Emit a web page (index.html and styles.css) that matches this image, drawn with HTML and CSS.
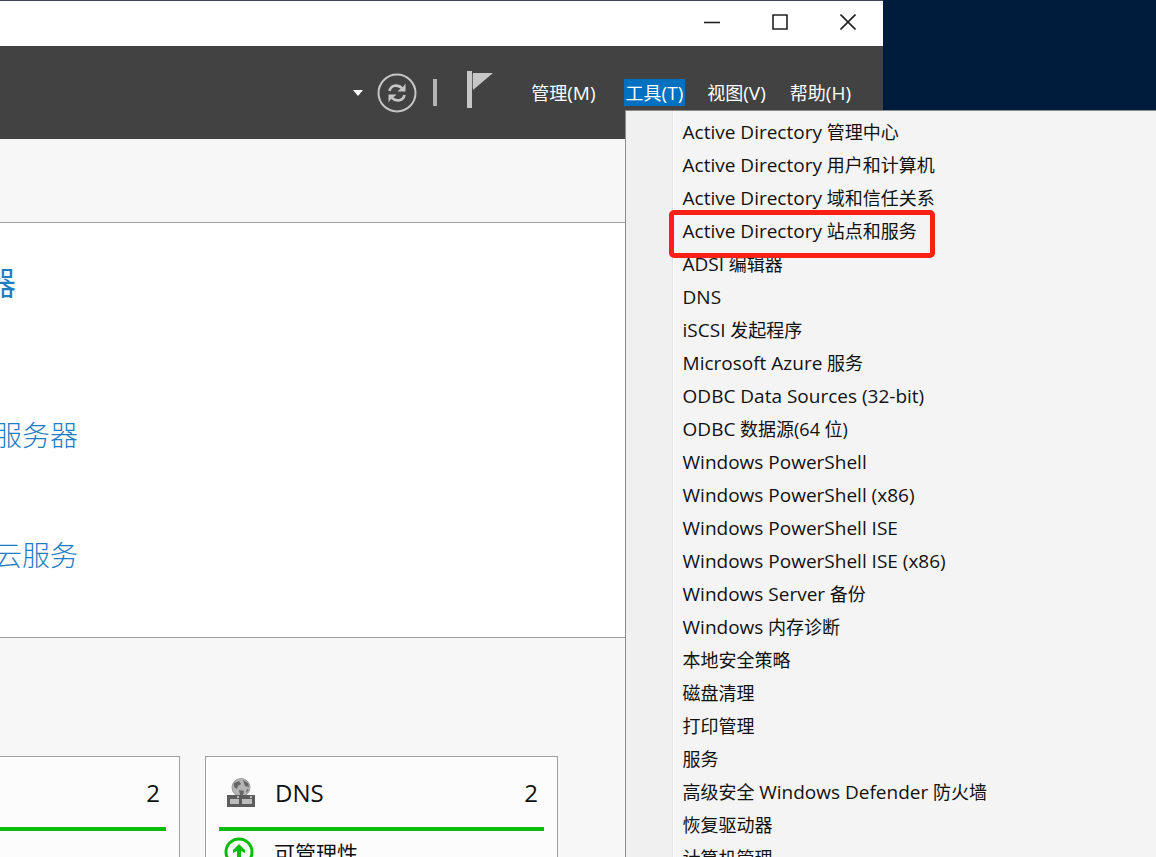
FILE: index.html
```html
<!DOCTYPE html>
<html lang="zh-CN">
<head>
<meta charset="utf-8">
<title>服务器管理器</title>
<link rel="stylesheet" href="styles.css">
</head>
<body>
<main class="window">
  <header class="titlebar">
    <button class="caption" aria-label="最小化"><svg width="16" height="16" viewBox="0 0 16 16"><path d="M0 8.500H16"/></svg></button>
    <button class="caption" aria-label="最大化"><svg width="16" height="16" viewBox="0 0 16 16"><path d="M1 1H15V15H1Z"/></svg></button>
    <button class="caption" aria-label="关闭"><svg width="16" height="16" viewBox="0 0 16 16"><path d="M.5.5L15.500 15.500M15.500.5L.5 15.500"/></svg></button>
  </header>
  <nav class="toolbar">
    <button class="tool tool-drop" aria-label="更多"><svg width="10" height="6" viewBox="0 0 10 6"><path d="M0 0H10L5 6Z" fill="#fff"/></svg></button>
    <button class="tool tool-refresh" aria-label="刷新">
      <svg width="40" height="40" viewBox="0 0 40 40" fill="none" stroke="#c6c6c6">
        <circle cx="20" cy="20" r="18.500" stroke-width="2"/>
        <path d="M12.500 18C13.500 12.500 20.500 10.500 25.500 15.500M27.500 22C26.500 27.500 19.500 29.500 14.500 24.500" stroke-width="2.600"/>
        <path d="M28.500 10.500V18.500H20.500L22.500 16.500L25 15.500ZM11.500 29.500V21.500H19.500L17.500 23.500L15 24.500Z" fill="#c6c6c6" stroke="none"/>
      </svg>
    </button>
    <span class="divider"></span>
    <button class="tool tool-flag" aria-label="通知">
      <svg width="26" height="37" viewBox="0 0 26 37" fill="#c6c6c6"><path d="M0 0H5V37H0ZM6 2H26L6 19Z"/><path d="M5 3H6V17H5Z" fill="#666"/></svg>
    </button>
    <div class="menus">
      <button class="menu-button menu-manage">管理<span class="latin">(M)</span></button>
      <div class="menu-anchor">
        <button class="menu-button is-open" aria-expanded="true">工具<span class="latin">(T)</span></button>
        <ul class="dropdown">
          <li><button class="item"><span class="latin">Active Directory</span> 管理中心</button></li>
          <li><button class="item"><span class="latin">Active Directory</span> 用户和计算机</button></li>
          <li><button class="item"><span class="latin">Active Directory</span> 域和信任关系</button></li>
          <li class="marked"><button class="item"><span class="latin">Active Directory</span> 站点和服务</button></li>
          <li><button class="item"><span class="latin">ADSI</span> 编辑器</button></li>
          <li><button class="item"><span class="latin">DNS</span></button></li>
          <li><button class="item"><span class="latin">iSCSI</span> 发起程序</button></li>
          <li><button class="item"><span class="latin">Microsoft Azure</span> 服务</button></li>
          <li><button class="item"><span class="latin">ODBC Data Sources (32-bit)</span></button></li>
          <li><button class="item"><span class="latin">ODBC</span> 数据源(64 位)</button></li>
          <li><button class="item"><span class="latin">Windows PowerShell</span></button></li>
          <li><button class="item"><span class="latin">Windows PowerShell (x86)</span></button></li>
          <li><button class="item"><span class="latin">Windows PowerShell ISE</span></button></li>
          <li><button class="item"><span class="latin">Windows PowerShell ISE (x86)</span></button></li>
          <li><button class="item"><span class="latin">Windows Server</span> 备份</button></li>
          <li><button class="item"><span class="latin">Windows</span> 内存诊断</button></li>
          <li><button class="item">本地安全策略</button></li>
          <li><button class="item">磁盘清理</button></li>
          <li><button class="item">打印管理</button></li>
          <li><button class="item">服务</button></li>
          <li><button class="item">高级安全 <span class="latin">Windows Defender</span> 防火墙</button></li>
          <li><button class="item">恢复驱动器</button></li>
          <li><button class="item">计算机管理</button></li>
        </ul>
      </div>
      <button class="menu-button">视图<span class="latin">(V)</span></button>
      <button class="menu-button">帮助<span class="latin">(H)</span></button>
    </div>
  </nav>
  <section class="welcome">
    <a class="step step-main" href="#">器</a>
    <a class="step" href="#">服务器</a>
    <a class="step" href="#">云服务</a>
  </section>
  <section class="cards">
    <article class="card">
      <div class="card-head"><span class="count">2</span></div>
    </article>
    <article class="card">
      <div class="card-head">
        <svg class="card-icon" width="28" height="30" viewBox="0 0 28 30">
          <circle cx="14" cy="10.500" r="9" fill="#b4b4b4" stroke="#999"/>
          <path d="M7 6L12 4L14 7L11 9L10 12L7 10ZM16 3L21 6L22 10L18 9ZM12 13L17 14L16 18H13ZM20 12L22 13L19 16Z" fill="#666"/>
          <path d="M0 18H28V30H0Z" fill="#5c5c5c"/>
          <path d="M3 22H12V27H3ZM15 22H25V27H15ZM10 19H12V21H10ZM23 19H25V21H23Z" fill="#bcbcbc"/>
        </svg>
        <h2 class="card-title">DNS</h2><span class="count">2</span>
      </div>
      <div class="card-row">
        <svg class="card-icon" width="30" height="30" viewBox="0 0 30 30">
          <circle cx="15" cy="15" r="13" fill="none" stroke="#0bbd0b" stroke-width="3"/>
          <path d="M15 7L21 13V16L17 14V23H13V14L9 16V13Z" fill="#0bbd0b"/>
        </svg>
        <span>可管理性</span>
      </div>
    </article>
  </section>
</main>
</body>
</html>
```
FILE: styles.css
```css
*, *::after { box-sizing: border-box; }

body {
  margin: 0;
  height: 100vh;
  overflow: hidden;
  background: linear-gradient(165deg, #001730 0, #001a38 60px, #001c3c 130px);
  font-family: "Open Sans", "Noto Sans CJK SC", sans-serif;
  font-size: 18px;
  color: #111;
}

button {
  padding: 0;
  border: 0;
  background: none;
  font: inherit;
  color: inherit;
}

svg { display: block; }

.latin { font-size: 19px; }

.window {
  display: flex;
  flex-direction: column;
  height: 100vh;
  margin-right: 273px;
  border-top: 1px solid #3c4654;
  background: #f7f7f7;
}

.titlebar {
  display: flex;
  flex: none;
  justify-content: flex-end;
  height: 45px;
  padding-right: 1px;
  background: #fff;
}

.caption {
  display: grid;
  place-items: center;
  width: 68px;
  padding-bottom: 3px;
}

.caption svg {
  fill: none;
  stroke: #222;
  stroke-width: 1.6;
}

.toolbar {
  display: flex;
  flex: none;
  align-items: center;
  justify-content: flex-end;
  height: 93px;
  padding-right: 30px;
  background: #424242;
  color: #fff;
}

.tool-drop { margin-right: 14px; }
.tool-refresh { margin-right: 16px; }
.tool-flag { margin: 0 36px 6px 30px; }

.divider {
  width: 4px;
  height: 27px;
  background: #b4b4b4;
}

.menus {
  display: flex;
  gap: 20px;
}

.menu-manage { margin-right: 6px; }

.menu-button {
  height: 27px;
  padding: 0 2px;
  line-height: 28px;
  white-space: nowrap;
}

.is-open { background: #0070c0; }

.menu-anchor { position: relative; }

.dropdown {
  position: absolute;
  z-index: 1;
  top: 31px;
  left: 1px;
  width: 532px;
  margin: 0;
  padding: 5px 0;
  border: 1px solid #8c8c8c;
  border-width: 1px 0 1px 1px;
  background: linear-gradient(90deg, #f0f0f0 46px, #e2e2e2 46px 47px, #fff 47px 48px, #f4f4f4 48px);
  list-style: none;
  color: #111;
}

.item {
  display: block;
  width: 100%;
  height: 33px;
  padding-left: 57px;
  line-height: 33px;
  text-align: left;
  white-space: nowrap;
}

.marked { position: relative; }

.marked::after {
  content: "";
  position: absolute;
  z-index: 1;
  top: -5px;
  left: 43px;
  width: 266px;
  height: 48px;
  border: 5px solid #ff2015;
  border-radius: 5px;
}

.welcome {
  display: flex;
  flex: none;
  flex-direction: column;
  align-items: flex-start;
  height: 416px;
  margin-top: 83px;
  padding-top: 36px;
  border: solid #a0a0a0;
  border-width: 1px 0;
  background: #fff;
}

.step {
  margin-left: -6px;
  margin-bottom: 80px;
  font-size: 28px;
  line-height: 40px;
  font-weight: 300;
  color: #1f7dc4;
  text-decoration: none;
}

.step-main {
  margin-left: -16px;
  margin-bottom: 108px;
  font-size: 32px;
  line-height: 48px;
  font-weight: 400;
}

.cards {
  display: flex;
  flex: 1;
  gap: 25px;
  margin: 118px 0 0 -173px;
}

.card {
  flex: none;
  width: 353px;
  padding: 0 13px;
  border: 1px solid #a0a0a0;
  border-bottom: 0;
  background: #fcfcfc;
}

.card-head {
  display: flex;
  align-items: center;
  height: 74px;
  padding: 0 6px 0 8px;
  border-bottom: 4px solid #0bbd0b;
  font-size: 24px;
}

.card-title {
  margin: 0 0 0 20px;
  font-size: 24px;
  font-weight: 400;
}

.count { margin-left: auto; }

.card-row {
  display: flex;
  align-items: center;
  gap: 20px;
  padding: 6px 5px;
  font-size: 21px;
}
```
